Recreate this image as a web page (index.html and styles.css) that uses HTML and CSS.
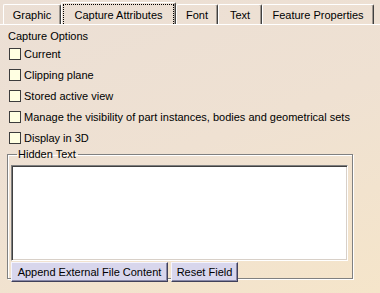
FILE: index.html
```html
<!DOCTYPE html>
<html lang="en">
<head>
    <meta charset="UTF-8">
    <title>Capture Attributes</title>
    <link rel="stylesheet" href="styles.css">
</head>
<body>
    <div class="tabs">
        <div class="tab tab-graphic">Graphic</div>
        <div class="tab active tab-capture"><span class="focus">Capture Attributes</span></div>
        <div class="tab tab-font">Font</div>
        <div class="tab tab-text">Text</div>
        <div class="tab tab-feature">Feature Properties</div>
    </div>

    <div class="panel">
        <div class="section-title">Capture Options</div>
        <div class="options">
            <label class="option"><span class="box"></span>Current</label>
            <label class="option"><span class="box"></span>Clipping plane</label>
            <label class="option"><span class="box"></span>Stored active view</label>
            <label class="option"><span class="box"></span>Manage the visibility of part instances, bodies and geometrical sets</label>
            <label class="option"><span class="box"></span>Display in 3D</label>
        </div>

        <fieldset class="group">
            <legend>Hidden Text</legend>
            <div class="textbox"></div>
            <div class="buttons">
                <button class="btn btn-append">Append External File Content</button>
                <button class="btn btn-reset">Reset Field</button>
            </div>
        </fieldset>
    </div>
</body>
</html>
```

FILE: styles.css
```css
html, body {
    height: 100%;
}
body {
    margin: 0;
    font-family: "Liberation Sans", Arial, sans-serif;
    font-size: 11px;
    color: #000;
    background: linear-gradient(160deg, #ebdfd5 0%, #efe1d2 50%, #f5e5ca 100%);
    overflow: hidden;
}
.tabs {
    display: flex;
    align-items: flex-end;
    height: 24px;
    padding-left: 3px;
}
.tab {
    box-sizing: border-box;
    height: 20px;
    display: flex;
    align-items: center;
    justify-content: center;
    border-top: 1px solid #fff;
    border-left: 1px solid #fff;
    border-right: 1px solid #404040;
    box-shadow: inset -1px 0 0 #a09890;
    border-radius: 2px 2px 0 0;
}
.tab.active {
    height: 22px;
    padding: 1px 1px 0 1px;
}
.focus {
    box-sizing: border-box;
    width: 100%;
    height: 100%;
    display: flex;
    align-items: center;
    justify-content: center;
    border: 1px dotted #000;
    border-bottom: none;
}
.tab-graphic { width: 58px; }
.tab-capture { width: 115px; }
.tab-font { width: 42px; }
.tab-text { width: 44px; }
.tab-feature { width: 112px; }

.panel {
    border-top: 1px solid #fff;
    padding: 4px 0 0 7px;
}
.section-title {
    padding-left: 1px;
    height: 15px;
    line-height: 15px;
}
.options {
    display: flex;
    flex-direction: column;
    gap: 9px;
    padding: 4px 0 0 2px;
}
.option {
    display: flex;
    align-items: center;
    gap: 3px;
    height: 12px;
    white-space: nowrap;
}
.box {
    box-sizing: border-box;
    width: 12px;
    height: 12px;
    border: 1px solid #3c3c3c;
    background: #ffffe2;
    flex: none;
}
.group {
    box-sizing: border-box;
    width: 346px;
    height: 130px;
    margin: 5px 0 0 0;
    padding: 0 3px;
    border: 1px solid #808080;
    box-shadow: inset 1px 1px 0 #fff, 1px 1px 0 #fff;
}
.group legend {
    padding: 0 2px 0 1px;
    margin-left: 6px;
    line-height: 11px;
}
.textbox {
    box-sizing: border-box;
    height: 96px;
    width: 337px;
    margin-top: 5px;
    background: #fff;
    border-top: 1px solid #808080;
    border-left: 1px solid #808080;
    border-right: 1px solid #fff;
    border-bottom: 1px solid #fff;
    box-shadow: inset 1px 1px 0 #404040, inset -1px -1px 0 #d8d0c8;
}
.buttons {
    display: flex;
    gap: 3px;
    margin-top: 1px;
}
.btn {
    box-sizing: border-box;
    height: 20px;
    padding: 0;
    font-family: inherit;
    font-size: 11px;
    color: #000;
    background: #d8d6ec;
    border-top: 1px solid #f4f4ff;
    border-left: 1px solid #f4f4ff;
    border-right: 1px solid #40405a;
    border-bottom: 1px solid #40405a;
    box-shadow: inset -1px -1px 0 #8888a8;
}
.btn-append { width: 157px; }
.btn-reset { width: 67px; }
```
